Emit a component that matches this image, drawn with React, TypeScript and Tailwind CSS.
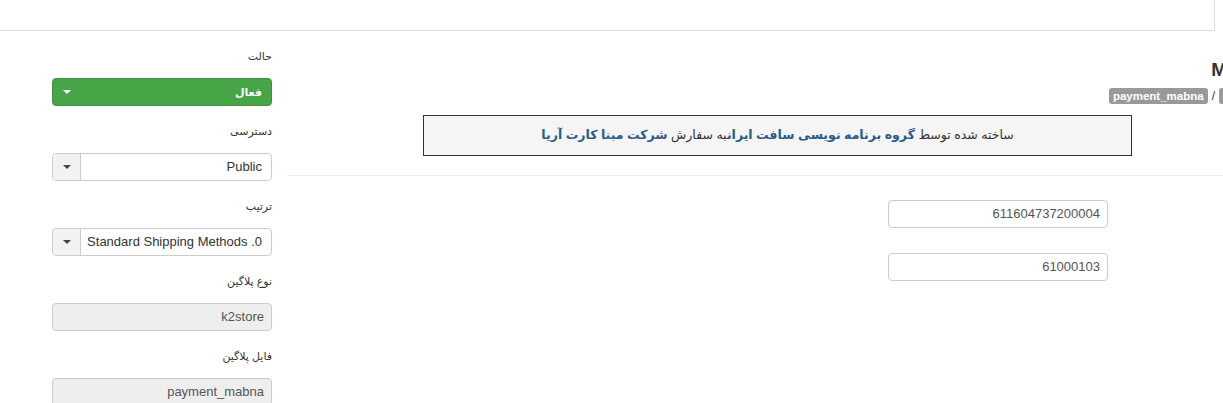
import React from 'react';

const latin = { fontFamily: '"Liberation Sans", "DejaVu Sans", Arial, sans-serif' };

function Caret({ white }: { white?: boolean }) {
  return (
    <span
      className={`inline-block w-0 h-0 border-l-[4px] border-r-[4px] border-t-[4px] border-l-transparent border-r-transparent ${
        white ? 'border-t-white' : 'border-t-[#444]'
      }`}
    />
  );
}

function Label({ children }: { children: React.ReactNode }) {
  return (
    <div dir="rtl" className="h-[20px] leading-[20px] text-[11px] text-[#333] text-right mb-[12px]">
      {children}
    </div>
  );
}

function SelectBox({ value }: { value: string }) {
  return (
    <div className="flex h-[28px] border border-[#ccc] rounded-[4px] bg-white overflow-hidden">
      <div className="w-[28px] shrink-0 flex items-center justify-center bg-[#f2f2f2] border-r border-[#ccc]">
        <Caret />
      </div>
      <div className="flex-1 flex items-center justify-end pr-[9px] text-[13px] text-[#333]">{value}</div>
    </div>
  );
}

function DisabledInput({ value }: { value: string }) {
  return (
    <div className="flex items-center justify-end h-[28px] border border-[#ccc] rounded-[4px] bg-[#eee] pr-[7px] text-[13px] text-[#555]">
      {value}
    </div>
  );
}

export default function App() {
  return (
    <div className="w-[1223px] h-[403px] overflow-hidden bg-white" style={latin}>
      <div className="h-[31px] w-[1215px] border-b border-r border-[#ddd]" />

      <div className="flex">
        {/* sidebar */}
        <div className="w-[287px] shrink-0 pl-[52px] pr-[15px] pt-[15px]">
          <div className="mb-[15px]">
            <Label>حالت</Label>
            <div className="flex items-center h-[28px] rounded-[4px] bg-[#46a546] border border-[#3e8f3e]">
              <div className="w-[28px] flex items-center justify-center">
                <Caret white />
              </div>
              <div dir="rtl" className="flex-1 text-right pr-[9px] text-[11px] text-white font-bold">فعال</div>
            </div>
          </div>
          <div className="mb-[15px]">
            <Label>دسترسی</Label>
            <SelectBox value="Public" />
          </div>
          <div className="mb-[15px]">
            <Label>ترتیب</Label>
            <SelectBox value="Standard Shipping Methods .0" />
          </div>
          <div className="mb-[15px]">
            <Label>نوع پلاگین</Label>
            <DisabledInput value="k2store" />
          </div>
          <div className="mb-[15px]">
            <Label>فایل پلاگین</Label>
            <DisabledInput value="payment_mabna" />
          </div>
        </div>

        {/* main */}
        <div className="flex-1 pt-[27px] overflow-hidden">
          <div className="flex justify-end h-[24px] leading-[24px] text-[19px] font-bold text-[#333]">
            <span className="mr-[-4px]">M</span>
          </div>
          <div className="flex justify-end items-center mt-[6px] h-[16px]">
            <span className="h-[16px] leading-[16px] px-[4px] rounded-[3px] bg-[#999] text-white text-[11.5px] font-bold">
              payment_mabna
            </span>
            <span className="mx-[4px] text-[12px] text-[#333]">/</span>
            <span className="w-[4px] h-[16px] rounded-l-[3px] bg-[#999]" />
          </div>

          <div
            dir="rtl"
            className="mt-[11px] ml-[136px] w-[709px] h-[41px] flex items-center justify-center border border-[#333] bg-[#f5f5f5] text-[12.5px] text-[#333]"
          >
            <span>
              ساخته شده توسط <b className="text-[#2a5c8a]">گروه برنامه نویسی سافت ایران</b>به سفارش{' '}
              <b className="text-[#2a5c8a]">شرکت مبنا کارت آریا</b>
            </span>
          </div>

          <div className="mt-[19px] border-t border-[#eee]" />

          <div className="ml-[601px] w-[220px] pt-[24px] flex flex-col gap-[25px]">
            <div className="h-[28px] flex items-center justify-end pr-[7px] border border-[#ccc] rounded-[4px] text-[13px] text-[#555]">
              611604737200004
            </div>
            <div className="h-[28px] flex items-center justify-end pr-[7px] border border-[#ccc] rounded-[4px] text-[13px] text-[#555]">
              61000103
            </div>
          </div>
        </div>
      </div>
    </div>
  );
}
